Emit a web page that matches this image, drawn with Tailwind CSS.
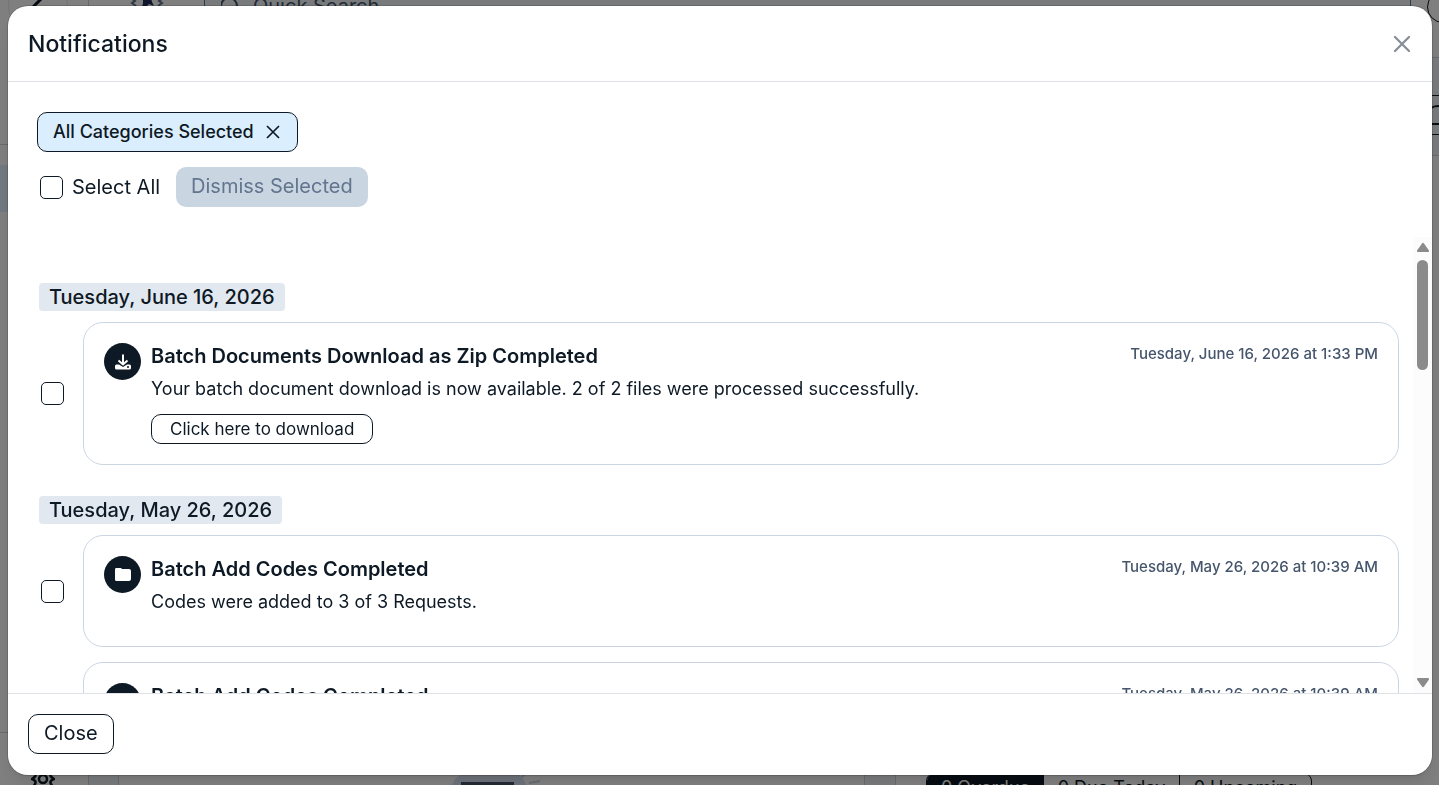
<!DOCTYPE html>
<html lang="en">
<head>
    <meta charset="UTF-8">
    <meta name="viewport" content="width=device-width, initial-scale=1.0">
    <title>Notifications</title>
    <script src="https://cdn.jsdelivr.net/npm/@tailwindcss/browser@4"></script>
</head>
<body class="h-screen overflow-hidden bg-white font-['Inter',sans-serif] text-[#0d1924]">
    <!-- App shell -->
    <div class="flex h-full overflow-hidden" inert>
        <aside class="flex w-[89px] shrink-0 flex-col overflow-hidden border-r border-slate-300">
            <div class="-mt-6 h-[169px] shrink-0 border-b border-slate-300 px-2">
                <div class="flex h-[60px] w-[60px] items-center justify-center rounded-full border border-slate-200">
                    <svg class="h-6 w-6" viewBox="0 0 24 24" fill="none" stroke="currentColor" stroke-width="3"><path d="M17 3L3 17"/></svg>
                </div>
            </div>
            <div class="mt-5 h-[47px] shrink-0 bg-sky-100"></div>
            <div class="mt-auto h-[53px] shrink-0 border-t border-slate-300 px-[31px] pt-[34px]">
                <svg class="h-6 w-6" viewBox="0 0 24 24" fill="none" stroke="currentColor" stroke-width="2.5"><circle cx="12" cy="12" r="4"/><path d="M5 3q-3 2-1 4t-3 5q5 2 3 5t1 5M19 3q3 2 1 4t3 5q-5 2-3 5t-1 5"/></svg>
            </div>
        </aside>
        <main class="flex min-w-0 flex-1 flex-col overflow-hidden">
            <header class="flex h-[58px] shrink-0 items-start overflow-hidden border-b border-slate-300 pl-10">
                <svg class="mt-[-22px] h-9 w-9 shrink-0" viewBox="0 0 36 36" fill="#1e2a5a"><path d="M14 20h8l1 4 2 4-5-2-2 2-5 1 1-4z"/><path d="M2 20l4 3-3 2 4 3M34 20l-4 3 3 2-4 3" fill="none" stroke="#64748b" stroke-width="2"/></svg>
                <div class="mt-[-20px] ml-[39px] flex h-[52px] flex-1 items-center gap-3 rounded-xl border border-slate-500 bg-slate-100 px-4 text-xl text-slate-600">
                    <svg class="h-5 w-5" viewBox="0 0 20 20" fill="none" stroke="currentColor" stroke-width="2"><circle cx="8" cy="10" r="8"/><path d="M14 16l4 4"/></svg>
                    <span>Quick Search</span>
                </div>
                <div class="mt-[-9px] -mr-5 ml-4 h-8 w-8 shrink-0 rounded-full border border-current"></div>
            </header>
            <div class="flex h-[98px] shrink-0 items-center justify-end border-b border-slate-300 bg-slate-100 pt-4">
                <div class="flex h-10 w-20 items-center justify-end border-y border-current bg-slate-100">
                    <svg class="h-5 w-2" viewBox="0 0 8 20" fill="none" stroke="currentColor" stroke-width="2"><path d="M1 3q1-2 7-2M1 19h7"/></svg>
                </div>
            </div>
            <div class="flex flex-1 gap-[30px] overflow-hidden bg-slate-100 pl-[29px]">
                <section class="flex flex-1 border-x border-slate-300 bg-white pt-[617px] pl-[332px]">
                    <svg class="h-5 w-24 shrink-0" viewBox="0 0 96 20"><path d="M0 14Q4 2 14 0H64Q72 2 76 14z" fill="#dbe4f5"/><path d="M10 9h53v11H10z" fill="#475569"/><path d="M71 4l4-4M78 10l11-2" stroke="#cbd5e1" stroke-width="2"/></svg>
                </section>
                <section class="w-[544px] border-l border-slate-300 bg-white pt-[617px] pl-[30px]">
                    <div class="flex h-7 w-[386px] overflow-hidden rounded-lg border border-current text-lg leading-7">
                        <span class="w-[117px] bg-[#0d1924] text-center text-white">0 Overdue</span>
                        <span class="w-[136px] border-r border-current text-center">0 Due Today</span>
                        <span class="flex-1 text-center">0 Upcoming</span>
                    </div>
                </section>
            </div>
        </main>
    </div>

    <!-- Notifications dialog -->
    <div id="overlay" class="fixed inset-0 flex bg-black/50 pt-1.5 pr-[7px] pb-2.5 pl-2">
        <div role="dialog" aria-modal="true" aria-labelledby="dialogTitle" class="flex min-w-0 flex-1 flex-col overflow-hidden rounded-[20px] bg-white shadow-lg ring-1 ring-black/15">
            <header class="flex h-[76px] shrink-0 items-center justify-between border-b border-[#dee2e6] px-5">
                <h1 id="dialogTitle" class="pt-0.5 text-[23px] font-medium">Notifications</h1>
                <button type="button" aria-label="Close dialog" onclick="closeDialog()" class="text-[#86909a]">
                    <svg class="h-[22px] w-[22px]" viewBox="0 0 22 22" fill="none" stroke="currentColor" stroke-width="2.3" stroke-linecap="round"><path d="M5 4l14 14M19 4L5 18"/></svg>
                </button>
            </header>

            <div class="flex shrink-0 flex-col items-start gap-[15px] px-[29px] pt-[30px] pb-[30px]">
                <button type="button" class="flex h-10 items-center gap-2.5 rounded-[10px] border border-current bg-[#dbeefe] px-[15px] text-lg font-medium">
                    All Categories Selected
                    <svg class="h-[18px] w-[18px]" viewBox="0 0 18 18" fill="none" stroke="currentColor" stroke-width="1.700"><path d="M3 3l12 12M15 3L3 15"/></svg>
                </button>
                <div class="flex items-center gap-4 pl-[3px]">
                    <label class="flex items-center gap-[9px] text-xl">
                        <input type="checkbox" id="selectAll" onchange="toggleAll(this.checked)" class="h-[23px] w-[23px] appearance-none rounded-[5px] border border-current checked:bg-current">
                        Select All
                    </label>
                    <button type="button" disabled class="h-10 rounded-[10px] bg-slate-300 px-[15px] pb-0.5 text-xl text-slate-500">Dismiss Selected</button>
                </div>
            </div>

            <div class="flex min-h-0 flex-1">
                <div id="list" class="min-w-0 flex-1 overflow-hidden pt-[46px] pr-[14px] pl-[31px]">
                    <section class="mb-[31px]">
                        <h2 class="mb-[11px] w-fit rounded bg-slate-200 px-2.5 text-xl font-medium">Tuesday, June 16, 2026</h2>
                        <div class="flex items-center gap-[19px]">
                            <input type="checkbox" aria-label="Select Batch Documents Download as Zip Completed" class="item ml-0.5 h-[23px] w-[23px] shrink-0 appearance-none rounded-[5px] border border-current checked:bg-current">
                            <article class="flex h-[143px] flex-1 items-start gap-2.5 rounded-[20px] border border-slate-300 p-5">
                                <span class="flex h-[37px] w-[37px] shrink-0 items-center justify-center rounded-full bg-[#0d1924] text-white">
                                    <svg class="h-[18px] w-[18px]" viewBox="0 0 18 18" fill="currentColor"><path d="M2.500 11.500h2.500L9 14l4-2.500h2.500q1.500 0 1.500 1.500v2q0 1.500-1.500 1.500h-13Q1 16.500 1 15v-2Q1 11.500 2.500 11.500z"/><path d="M9 1.500v9.500M4.500 7.500L9 11.500 13.500 7.500" fill="none" stroke="currentColor" stroke-width="2"/><circle cx="14" cy="14" r="1" fill="#0d1924"/></svg>
                                </span>
                                <div class="min-w-0 flex-1">
                                    <h3 class="text-xl leading-[26px] font-semibold">Batch Documents Download as Zip Completed</h3>
                                    <p class="mt-[7px] text-lg leading-[26px]">Your batch document download is now available. 2 of 2 files were processed successfully.</p>
                                    <button type="button" class="mt-3 block h-[30px] rounded-[10px] border border-current px-[18px] text-[17px] leading-7">Click here to download</button>
                                </div>
                                <time class="text-[15px] leading-[22px] font-medium text-slate-600">Tuesday, June 16, 2026 at 1:33 PM</time>
                            </article>
                        </div>
                    </section>

                    <section>
                        <h2 class="mb-[11px] w-fit rounded bg-slate-200 px-2.5 text-xl font-medium">Tuesday, May 26, 2026</h2>
                        <div class="mb-[15px] flex items-center gap-[19px]">
                            <input type="checkbox" aria-label="Select Batch Add Codes Completed" class="item ml-0.5 h-[23px] w-[23px] shrink-0 appearance-none rounded-[5px] border border-current checked:bg-current">
                            <article class="flex h-[112px] flex-1 items-start gap-2.5 rounded-[20px] border border-slate-300 p-5">
                                <span class="flex h-[37px] w-[37px] shrink-0 items-center justify-center rounded-full bg-[#0d1924] text-white">
                                    <svg class="h-[18px] w-[18px]" viewBox="0 0 18 18" fill="currentColor"><path d="M2 2h4.500q1 0 1.500 1h7q2 0 2 2v8q0 2-2 2H2.500Q1 15 1 13.500V3.500Q1 2 2 2z"/></svg>
                                </span>
                                <div class="min-w-0 flex-1">
                                    <h3 class="text-xl leading-[26px] font-semibold">Batch Add Codes Completed</h3>
                                    <p class="mt-[7px] text-lg leading-[26px]">Codes were added to 3 of 3 Requests.</p>
                                </div>
                                <time class="text-[15px] leading-[22px] font-medium text-slate-600">Tuesday, May 26, 2026 at 10:39 AM</time>
                            </article>
                        </div>
                        <div class="mb-[15px] flex items-center gap-[19px]">
                            <input type="checkbox" aria-label="Select Batch Add Codes Completed" class="item ml-0.5 h-[23px] w-[23px] shrink-0 appearance-none rounded-[5px] border border-current checked:bg-current">
                            <article class="flex h-[112px] flex-1 items-start gap-2.5 rounded-[20px] border border-slate-300 p-5">
                                <span class="flex h-[37px] w-[37px] shrink-0 items-center justify-center rounded-full bg-[#0d1924] text-white">
                                    <svg class="h-[18px] w-[18px]" viewBox="0 0 18 18" fill="currentColor"><path d="M2 2h4.500q1 0 1.500 1h7q2 0 2 2v8q0 2-2 2H2.500Q1 15 1 13.500V3.500Q1 2 2 2z"/></svg>
                                </span>
                                <h3 class="min-w-0 flex-1 text-xl leading-[26px] font-semibold">Batch Add Codes Completed</h3>
                                <time class="text-[15px] leading-[22px] font-medium text-slate-600">Tuesday, May 26, 2026 at 10:39 AM</time>
                            </article>
                        </div>
                    </section>
                </div>
                <!-- Scrollbar -->
                <div aria-hidden="true" class="flex w-[19px] flex-col items-center bg-[#fcfcfc] py-[5px] text-[#8b8b8b]">
                    <svg class="h-2.5 w-3.5" viewBox="0 0 14 10" fill="currentColor"><path d="M6 1.500q1-1.500 2 0l5 7q.5 1.500-1 1.500H2q-1.500 0-1-1.500z"/></svg>
                    <div class="mt-2 h-[110px] w-[11px] rounded-full bg-current"></div>
                    <svg class="mt-auto h-2.5 w-3.5" viewBox="0 0 14 10" fill="currentColor"><path d="M6 8.500q1 1.500 2 0l5-7Q13.500 0 12 0H2Q.5 0 1 1.500z"/></svg>
                </div>
            </div>

            <footer class="flex h-[82px] shrink-0 items-center border-t border-[#dee2e6] px-5 pb-0.5">
                <button type="button" onclick="closeDialog()" class="h-10 rounded-[10px] border border-current px-[15px] pb-0.5 text-xl">Close</button>
            </footer>
        </div>
    </div>

    <script>
        function closeDialog() {
            document.getElementById('overlay').classList.add('hidden');
        }

        function toggleAll(checked) {
            document.querySelectorAll('.item').forEach((box) => {
                box.checked = checked;
            });
        }
    </script>
</body>
</html>
